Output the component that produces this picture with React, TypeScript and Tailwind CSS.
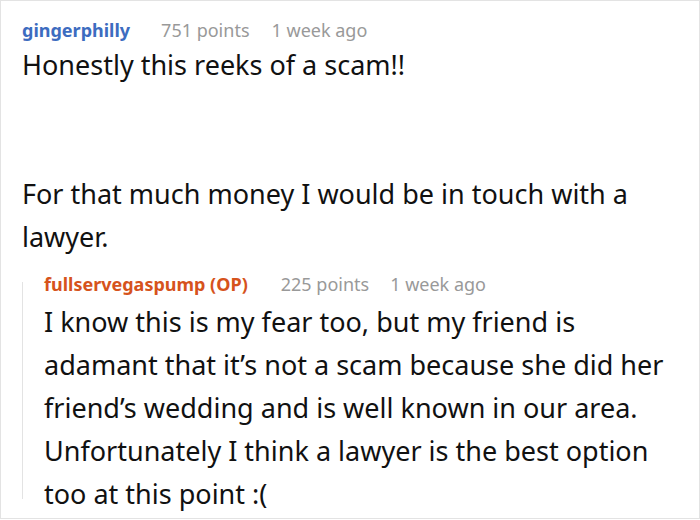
export default function App() {
  return (
    <div className="w-[700px] h-[520px] bg-white overflow-hidden" style={{ fontFamily: '"Noto Sans", "Open Sans", sans-serif' }}>
      <div className="w-[700px] h-[519px] border border-[#e3e3e3] pl-[21px] pt-[18px] pr-[8px]">
        <div className="flex items-baseline text-[18px] leading-[22px]">
          <span className="font-bold text-[#3d6cc0]">gingerphilly</span>
          <span className="ml-[31px] text-[#999999]">751 points</span>
          <span className="ml-[22px] text-[#999999]">1 week ago</span>
        </div>
        <div className="text-[27px] leading-[43px] text-[#111111] mt-[2px]">
          <p>Honestly this reeks of a scam!!</p>
          <p className="mt-[86px]">For that much money I would be in touch with a lawyer.</p>
        </div>
        <div className="mt-[15px] flex">
          <div className="w-px bg-[#e3e3e3] mt-[9px] mb-[16px] shrink-0" />
          <div className="pl-[21px]">
            <div className="flex items-baseline text-[18px] leading-[22px]">
              <span className="font-bold text-[#d6531c]">fullservegaspump (OP)</span>
              <span className="ml-[33px] text-[#999999]">225 points</span>
              <span className="ml-[21px] text-[#999999]">1 week ago</span>
            </div>
            <p className="text-[27px] leading-[43px] text-[#111111] mt-[5px]">
              I know this is my fear too, but my friend is adamant that it’s not a scam because she did her friend’s wedding and is well known in our area. Unfortunately I think a lawyer is the best option too at this point :(
            </p>
          </div>
        </div>
      </div>
    </div>
  );
}
